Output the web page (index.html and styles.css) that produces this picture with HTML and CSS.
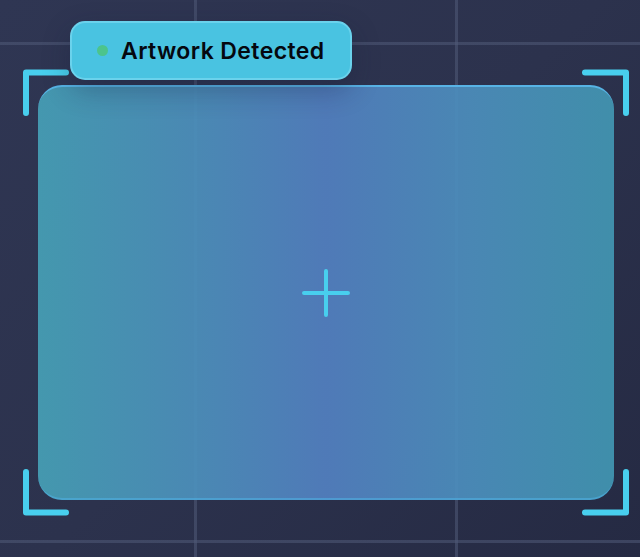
FILE: index.html
```html
<!DOCTYPE html>
<html lang="en">
<head>
<meta charset="utf-8">
<title>Scanner</title>
<link rel="stylesheet" href="styles.css">
</head>
<body>
<div class="stage">
  <div class="frame">
    <svg class="cross" width="50" height="50" viewBox="0 0 50 50" aria-hidden="true">
      <path d="M25 3V47M3 25H47" stroke="#48cfee" stroke-width="4" stroke-linecap="round" fill="none"/>
    </svg>
  </div>
  <svg class="corner tl" width="56" height="56" viewBox="0 0 56 56" aria-hidden="true"><path d="M6 47V6.5H46" /></svg>
  <svg class="corner tr" width="56" height="56" viewBox="0 0 56 56" aria-hidden="true"><path d="M9 6.5H50V47" /></svg>
  <svg class="corner bl" width="56" height="56" viewBox="0 0 56 56" aria-hidden="true"><path d="M6 6V46.5H46" /></svg>
  <svg class="corner br" width="56" height="56" viewBox="0 0 56 56" aria-hidden="true"><path d="M50 6V46.5H9" /></svg>
  <div class="badge"><span class="dot"></span><span class="label">Artwork Detected</span></div>
</div>
</body>
</html>
```
FILE: styles.css
```css
html, body {
  margin: 0;
  padding: 0;
}
body {
  width: 640px;
  height: 557px;
  overflow: hidden;
  font-family: Inter, "Noto Sans", sans-serif;
  background:
    linear-gradient(to right, transparent 194px, rgba(80,90,120,0.55) 194px, rgba(80,90,120,0.55) 197px, transparent 197px),
    linear-gradient(to right, transparent 455px, rgba(80,90,120,0.55) 455px, rgba(80,90,120,0.55) 458px, transparent 458px),
    linear-gradient(to bottom, transparent 42px, rgba(80,90,120,0.55) 42px, rgba(80,90,120,0.55) 45px, transparent 45px),
    linear-gradient(to bottom, transparent 540px, rgba(80,90,120,0.55) 540px, rgba(80,90,120,0.55) 543px, transparent 543px),
    linear-gradient(135deg, #2f3653 0%, #2c324d 50%, #252a43 100%);
}
.stage {
  position: relative;
  width: 640px;
  height: 557px;
  padding: 85px 26px 0 38px;
  box-sizing: border-box;
}
.frame {
  width: 576px;
  height: 415px;
  box-sizing: border-box;
  border-radius: 24px;
  border-top: 2px solid rgba(90, 185, 235, 0.9);
  border-bottom: 2px solid rgba(80, 175, 225, 0.6);
  background: linear-gradient(to right, rgba(70,160,182,0.93) 0%, rgba(77,142,188,0.93) 30%, rgba(82,128,192,0.93) 50%, rgba(76,142,188,0.93) 75%, rgba(66,150,178,0.93) 100%);
  display: flex;
  align-items: center;
  justify-content: center;
}
.cross {
  display: block;
  margin-left: -1px;
  margin-top: 1px;
}
.corner {
  position: absolute;
  fill: none;
  stroke: #48cfee;
  stroke-width: 6;
  stroke-linecap: round;
  stroke-linejoin: round;
}
.tl { left: 20px; top: 66px; }
.tr { left: 576px; top: 66px; }
.bl { left: 20px; top: 466px; }
.br { left: 576px; top: 466px; }
.badge {
  position: absolute;
  left: 70px;
  top: 21px;
  width: 282px;
  height: 59px;
  box-sizing: border-box;
  border-radius: 15px;
  background: #49c3e1;
  border: 2px solid #6ad2ec;
  box-shadow: 0 10px 28px rgba(20, 30, 60, 0.3);
  display: flex;
  align-items: center;
  padding-left: 25px;
  gap: 13px;
}
.dot {
  width: 11px;
  height: 11px;
  border-radius: 50%;
  background: #4cc48c;
  flex: none;
}
.label {
  font-size: 23px;
  font-weight: 600;
  color: #05080f;
  letter-spacing: 0.4px;
}
```
